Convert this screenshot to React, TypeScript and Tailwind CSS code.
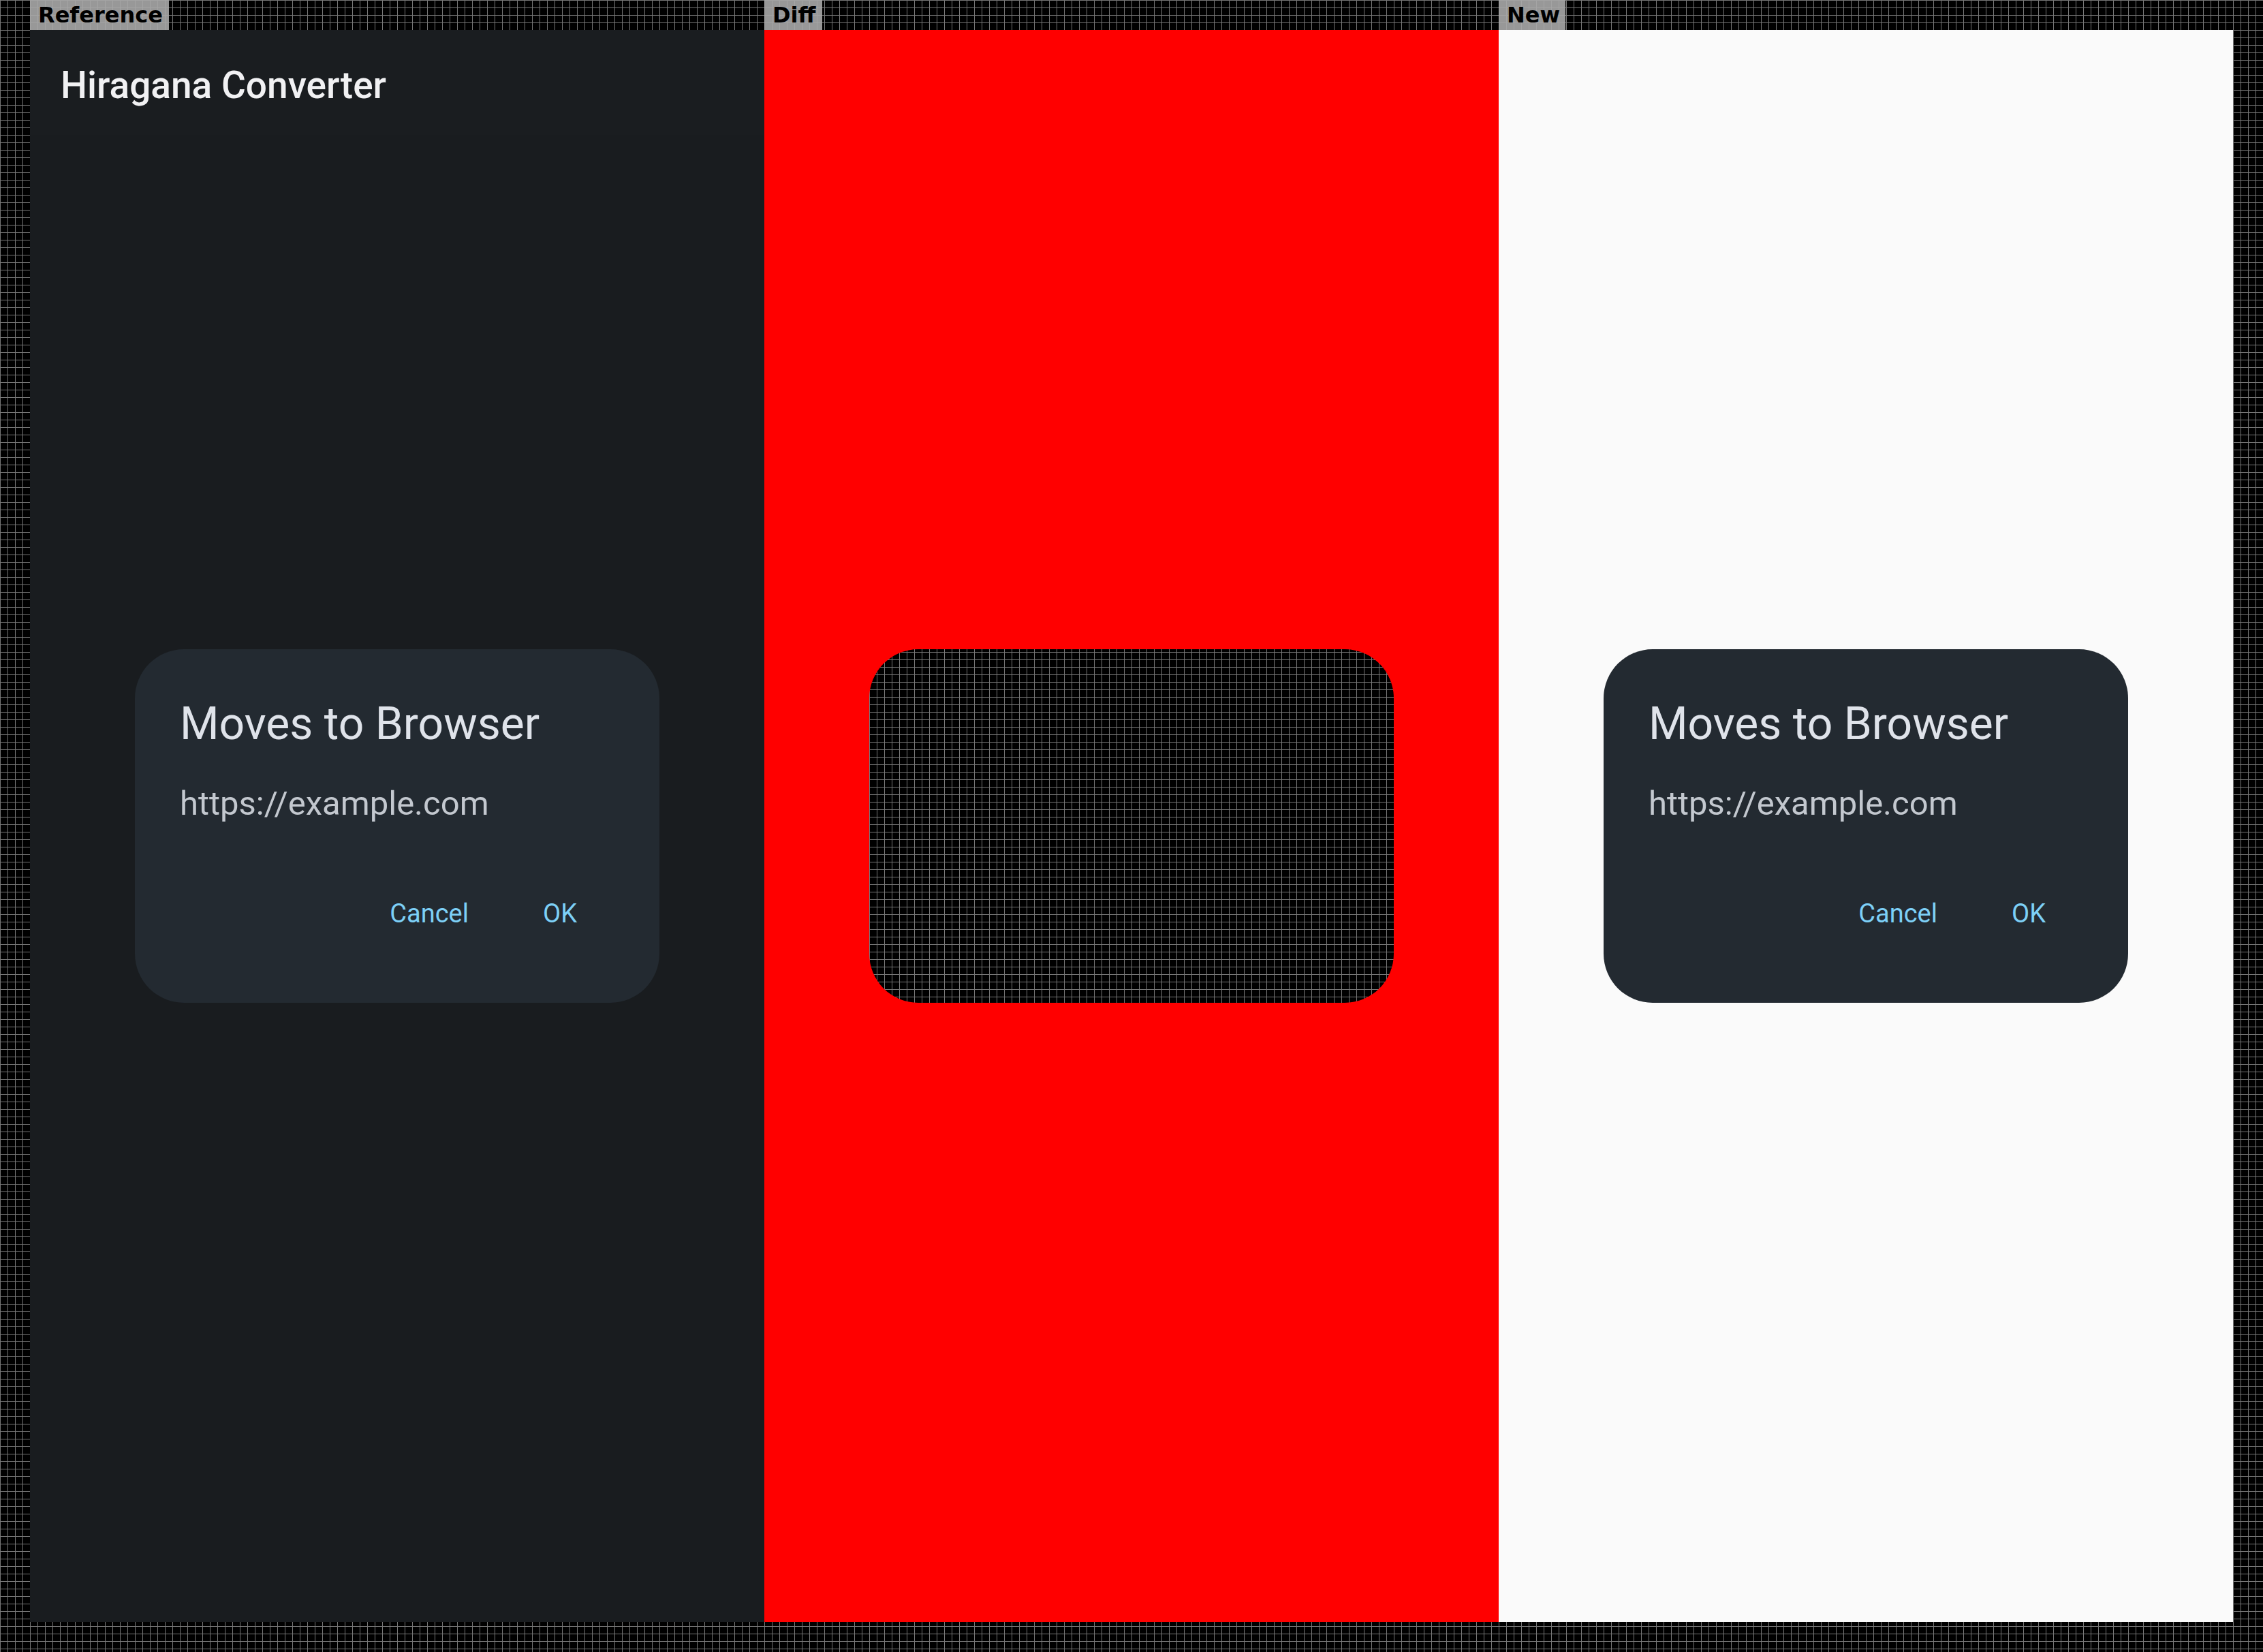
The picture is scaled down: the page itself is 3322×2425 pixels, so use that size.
import React from "react";

function Dialog() {
  return (
    <div className="w-[770px] h-[519px] rounded-[72px] bg-[#232a31] pl-[66px] pt-[70px] flex flex-col font-[Roboto,sans-serif]">
      <div className="text-[66px] leading-[80px] text-[#dfe3ea]">Moves to Browser</div>
      <div className="mt-[47px] text-[49px] leading-[60px] text-[#c3c8cf]">https://example.com</div>
      <div className="mt-[109px] flex justify-end gap-[109px] pr-[121px] text-[38px] leading-[44px] text-[#7dd0f7]">
        <span>Cancel</span>
        <span>OK</span>
      </div>
    </div>
  );
}

function Label({ text, w }: { text: string; w: string }) {
  return (
    <div className="h-[44px] flex">
      <div className={`h-[44px] pl-[12px] whitespace-nowrap bg-[rgba(168,168,168,0.9)] text-black font-bold text-[32px] leading-[44px] font-['DejaVu_Sans',sans-serif] ${w}`}>
        {text}
      </div>
    </div>
  );
}

export default function App() {
  return (
    <div className="w-[3322px] h-[2425px] bg-black bg-[linear-gradient(to_right,#777_1px,transparent_1px),linear-gradient(to_bottom,#777_1px,transparent_1px)] bg-[length:11px_11px] px-[44px] flex">
      <div className="flex flex-col w-[1078px]">
        <Label text="Reference" w="w-[204px]" />
        <div className="relative h-[2337px] bg-[#191c1f]">
          <div className="h-[154px] bg-[#1a1d20] flex items-center pl-[45px] pt-[8px] font-[Roboto,sans-serif] font-medium text-[55px] text-[#f1f1f3]">
            Hiragana Converter
          </div>
          <div className="absolute inset-0 flex items-center justify-center">
            <Dialog />
          </div>
        </div>
      </div>
      <div className="flex flex-col w-[1078px]">
        <Label text="Diff" w="w-[85px]" />
        <div className="relative h-[2337px] overflow-hidden flex items-center justify-center">
          <div className="w-[770px] h-[519px] rounded-[72px] shadow-[0_0_0_3000px_#ff0000]" />
        </div>
      </div>
      <div className="flex flex-col w-[1078px]">
        <Label text="New" w="w-[98px]" />
        <div className="relative h-[2337px] bg-[#fafafa] flex items-center justify-center">
          <Dialog />
        </div>
      </div>
    </div>
  );
}
